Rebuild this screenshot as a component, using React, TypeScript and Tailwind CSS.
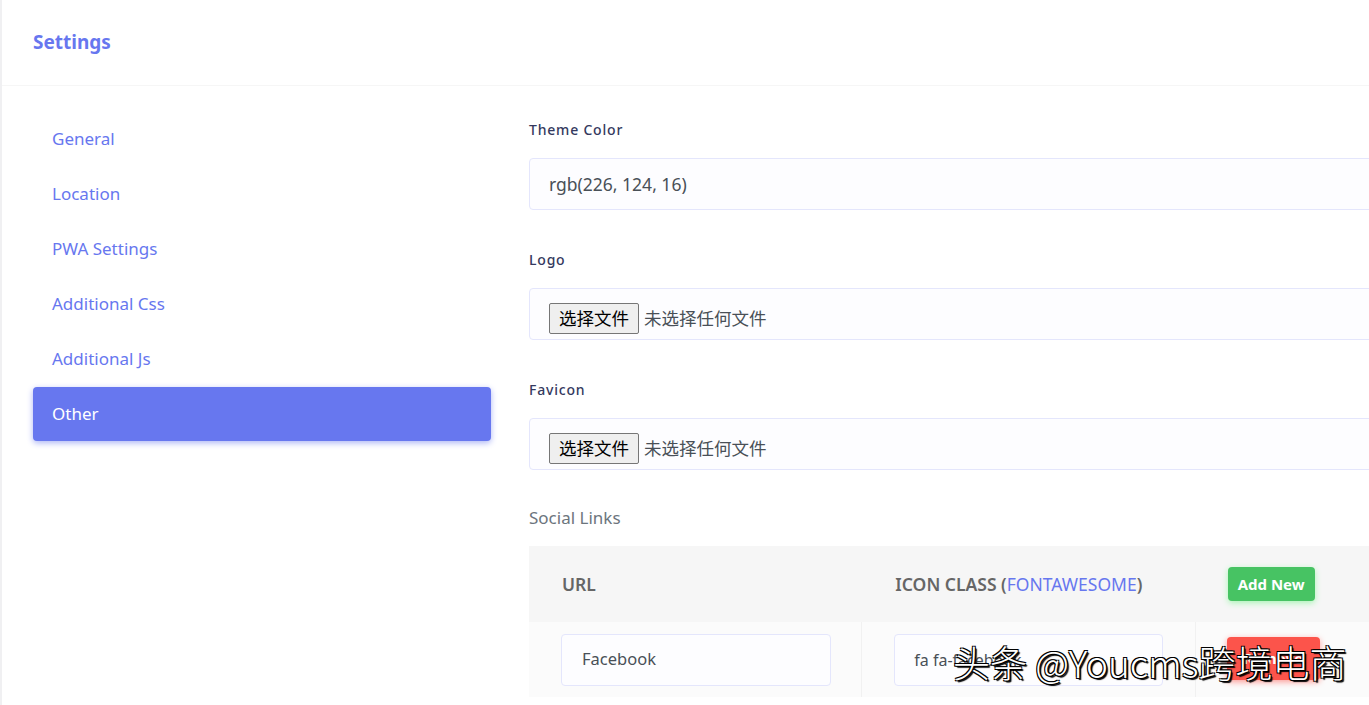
import React from 'react';

const menu = ['General', 'Location', 'PWA Settings', 'Additional Css', 'Additional Js', 'Other'];

const FileField = () => (
  <div className="flex h-[52px] items-center rounded border border-[#e4e6fc] bg-[#fdfdff] pl-[19px] pt-[8px]">
    <span className="flex h-[31px] w-[90px] items-center justify-center rounded-[2px] border border-[#767676] bg-[#efefef] text-[17.5px] text-black">
      选择文件
    </span>
    <span className="ml-[5px] text-[17.5px] text-[#495057]">未选择任何文件</span>
  </div>
);

export default function App() {
  const font = { fontFamily: '"Noto Sans", "Noto Sans CJK SC", sans-serif' };
  return (
    <div className="relative h-[705px] w-[1369px] overflow-hidden bg-[#f0f0f2] pl-[2px]" style={font}>
      <div className="h-full bg-white">
        <div className="flex h-[86px] items-center border-b border-[#f6f6f6] pl-[31px]">
          <h4 className="text-[19px] font-bold text-[#6777ef]">Settings</h4>
        </div>

        <div className="flex">
          <div className="w-[458px] shrink-0 ml-[31px] pt-[25px]">
            {menu.map((m) => (
              <div
                key={m}
                className={
                  m === 'Other'
                    ? 'mt-[1px] flex h-[54px] items-center rounded bg-[#6777ef] pl-[19px] text-[17px] text-white shadow-[0_2px_6px_#acb5f6]'
                    : 'flex h-[55px] items-center pl-[19px] text-[17px] text-[#6777ef]'
                }
              >
                {m}
              </div>
            ))}
          </div>

          <div className="ml-[38px] w-[1000px] shrink-0 pt-[33px]">
            <div className="text-[14px] font-medium tracking-[0.8px] text-[#34395e]">Theme Color</div>
            <div className="mt-[18px] flex h-[52px] items-center rounded border border-[#e4e6fc] bg-[#fdfdff] pl-[19px] text-[17.5px] text-[#495057]">
              rgb(226, 124, 16)
            </div>

            <div className="mt-[39px] text-[14px] font-medium tracking-[0.8px] text-[#34395e]">Logo</div>
            <div className="mt-[18px]">
              <FileField />
            </div>

            <div className="mt-[39px] text-[14px] font-medium tracking-[0.8px] text-[#34395e]">Favicon</div>
            <div className="mt-[18px]">
              <FileField />
            </div>

            <div className="mt-[36px] text-[17px] leading-[24px] text-[#6c757d]">Social Links</div>

            <div className="mt-[16px]">
              <div className="grid h-[76px] grid-cols-3 items-center bg-[#f6f6f6] text-[17.5px] font-semibold text-[#666]">
                <div className="pl-[33px]">URL</div>
                <div className="pl-[33px]">
                  ICON CLASS (<span className="font-normal text-[#6777ef]">FONTAWESOME</span>)
                </div>
                <div className="pl-[32px]">
                  <button className="h-[34px] w-[87px] rounded bg-[#47c363] text-[15px] font-bold text-white shadow-[0_2px_6px_#a8f5b4]">
                    Add New
                  </button>
                </div>
              </div>
              <div className="grid h-[75px] grid-cols-3 bg-[#fbfbfb]">
                <div className="flex items-center border-r border-[#f1f1f1] pl-[32px]">
                  <div className="flex h-[52px] w-[270px] items-center rounded border border-[#e4e6fc] bg-[#fdfdff] pl-[20px] text-[16.5px] text-[#495057]">
                    Facebook
                  </div>
                </div>
                <div className="flex items-center border-r border-[#f1f1f1] pl-[32px]">
                  <div className="flex h-[52px] w-[269px] items-center rounded border border-[#e4e6fc] bg-[#fdfdff] pl-[19px] text-[16px] text-[#495057]">
                    fa fa-facebook
                  </div>
                </div>
                <div className="flex items-center pb-[3px] pl-[31px]">
                  <button className="h-[43px] w-[93px] rounded bg-[#fc544b] text-[15px] font-bold text-white shadow-[0_2px_6px_#fd9b96]">
                    Remove
                  </button>
                </div>
              </div>
            </div>
          </div>
        </div>
      </div>

      <div
        className="absolute left-[953px] top-[644px] text-[37px] leading-none text-white"
        style={{
          fontFamily: '"Noto Sans CJK SC", "Noto Sans", sans-serif',
          fontWeight: 300,
          textShadow: '1px 1px 0 #000, -1px -1px 0 #000, 1px -1px 0 #000, -1px 1px 0 #000, 2px 2px 1px #000',
        }}
      >
        头条 @Youcms跨境电商
      </div>
    </div>
  );
}
